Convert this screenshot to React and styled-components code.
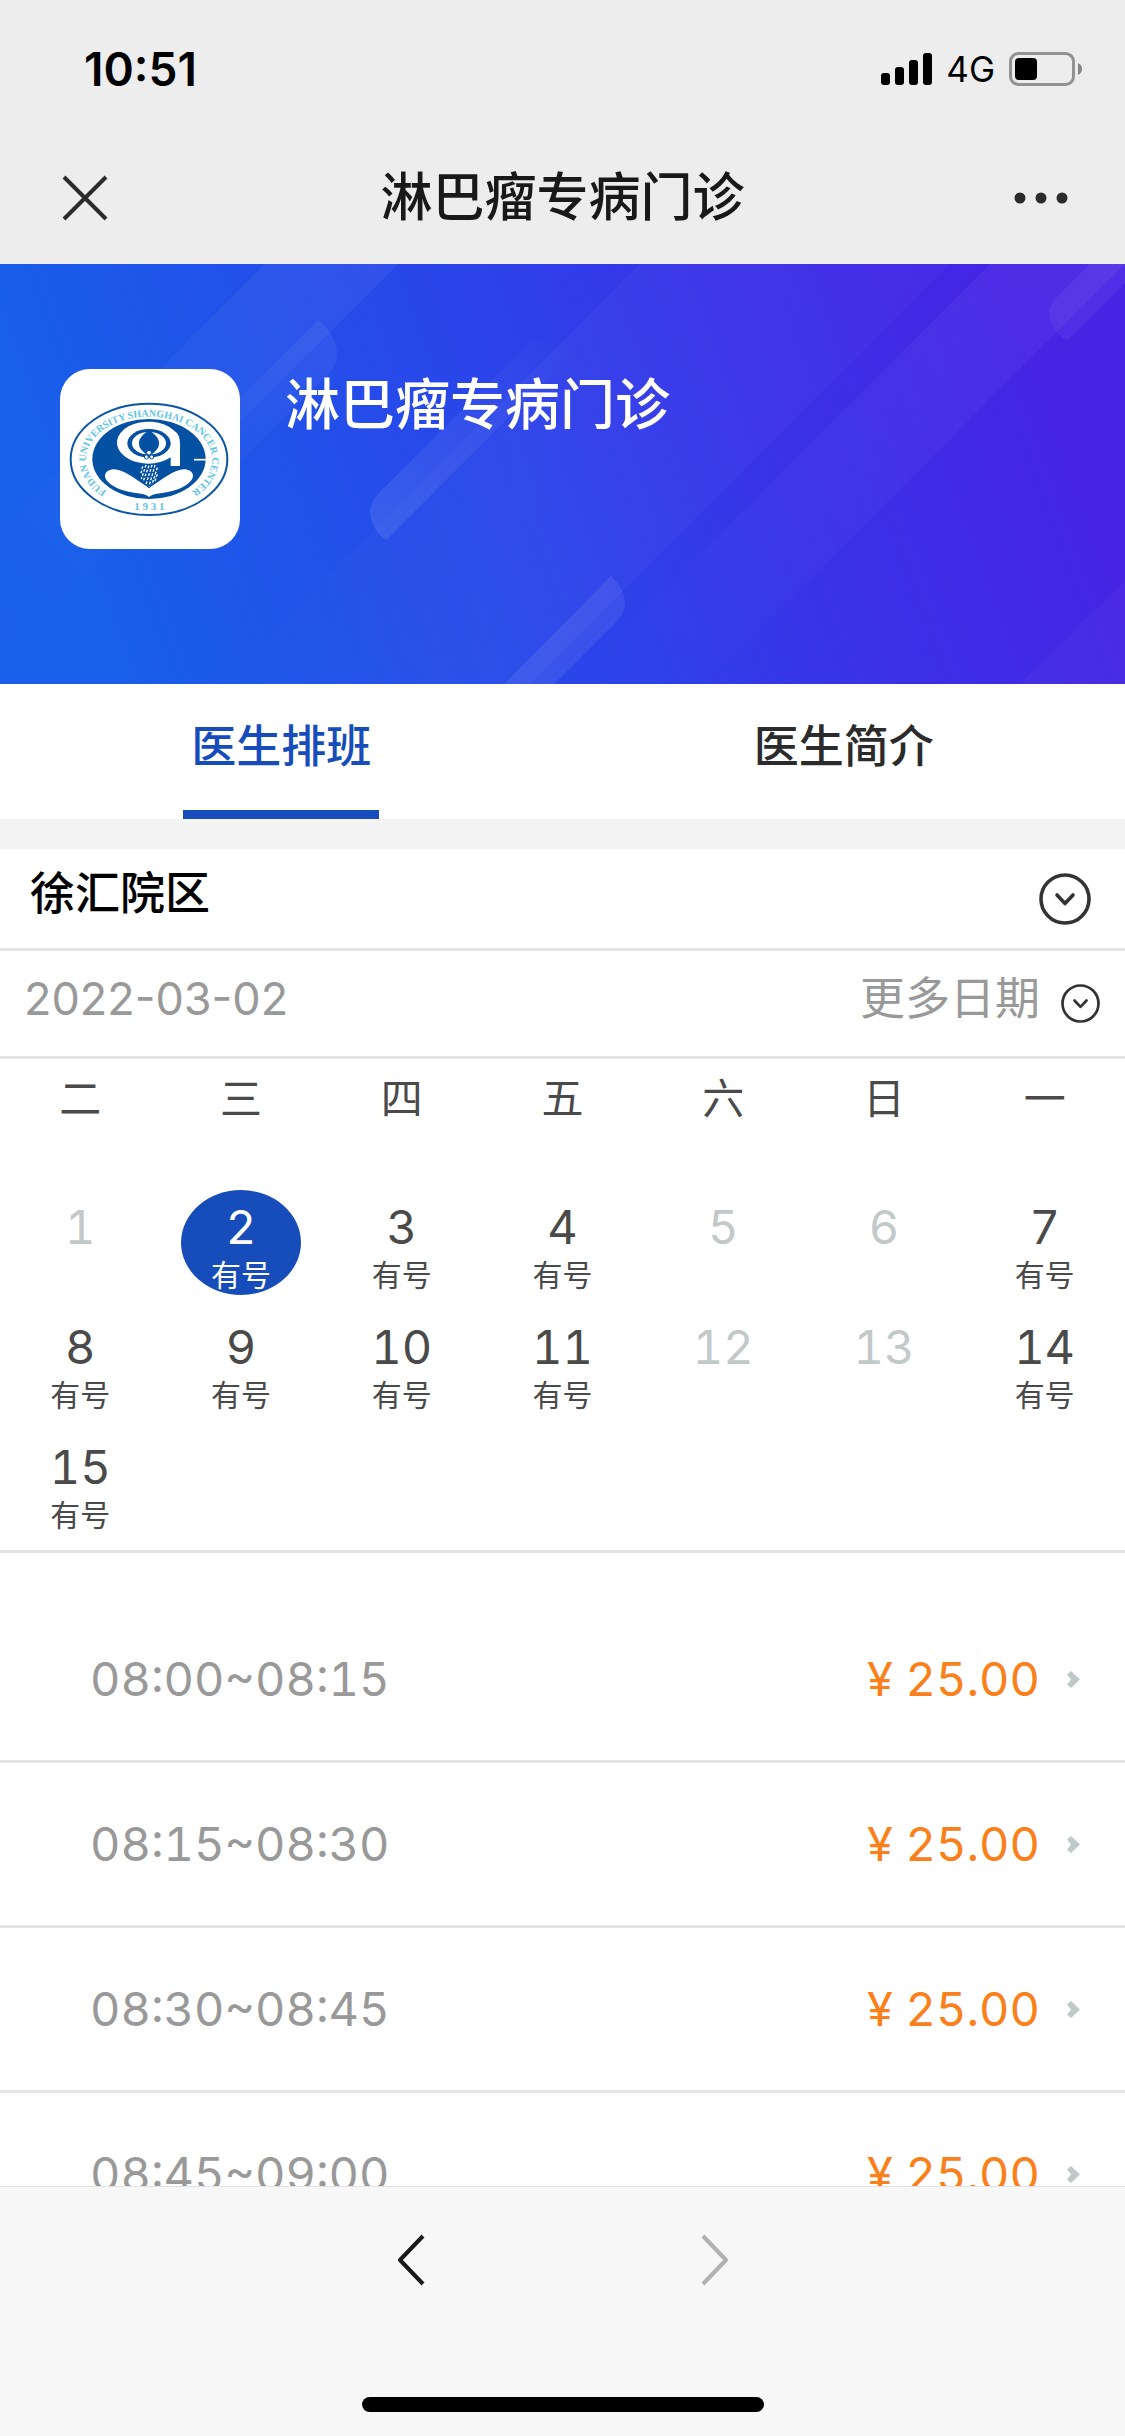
import React, { useState } from 'react';
import styled, { createGlobalStyle } from 'styled-components';

const GlobalStyle = createGlobalStyle`
    * {
        box-sizing: border-box;
    }
    body {
        margin: 0;
        background: #fff;
        font-family: Inter, "Noto Sans CJK SC", sans-serif;
    }
    button {
        margin: 0;
        padding: 0;
        border: 0;
        background: none;
        color: inherit;
        font: inherit;
        cursor: pointer;
    }
    svg {
        display: block;
    }
`;

const Screen = styled.div`
    display: flex;
    flex-direction: column;
    height: 100vh;
    overflow: hidden;
`;

const StatusBar = styled.div`
    display: flex;
    flex: none;
    justify-content: space-between;
    align-items: center;
    height: 132px;
    padding: 6px 43px 0 84px;
    background: #ededed;
    color: #000;
`;

const Clock = styled.span`
    font-size: 46px;
    font-weight: 600;
    line-height: 54px;
`;

const Signals = styled.div`
    display: flex;
    align-items: center;
    gap: 14px;
`;

const Network = styled.span`
    font-size: 35px;
    line-height: 42px;
`;

const NavBar = styled.header`
    display: grid;
    flex: none;
    grid-template-columns: 1fr auto 1fr;
    align-items: center;
    height: 132px;
    padding: 0 57px;
    background: #ededed;
    color: #191919;
`;

const NavTitle = styled.h1`
    margin: 0;
    font-size: 52px;
    font-weight: 500;
    line-height: 66px;
`;

const NavButton = styled.button`
    justify-self: ${props => props.$side};
`;

const Content = styled.main`
    flex: 1;
    min-height: 0;
    overflow: hidden;
`;

const Hero = styled.section`
    position: relative;
    display: flex;
    align-items: flex-start;
    gap: 45px;
    height: 420px;
    padding: 105px 60px;
    background: linear-gradient(70deg, #185fea 10%, #2a45e9 46%, #3a32e7 68%, #4524e4 90%);
    color: #fff;
`;

const Streaks = styled.svg`
    position: absolute;
    inset: 0;
    width: 100%;
    height: 100%;
`;

const LogoCard = styled.div`
    position: relative;
    flex: none;
    width: 180px;
    height: 180px;
    border-radius: 30px;
    background: #fff;
`;

const ClinicName = styled.h2`
    position: relative;
    margin: 0;
    font-size: 55px;
    font-weight: 500;
    line-height: 70px;
`;

const Tabs = styled.nav`
    display: flex;
    border-bottom: 30px solid #f3f3f3;
`;

const Tab = styled.button`
    flex: 1;
    display: flex;
    justify-content: center;
    color: ${props => props.$active ? '#174dbb' : '#2b2b2b'};
    font-size: 45px;
    font-weight: 500;
    line-height: 126px;

    span {
        padding: 0 8px;
        border-bottom: 9px solid ${props => props.$active ? '#174dbb' : 'transparent'};
    }
`;

const PickerRow = styled.button`
    display: flex;
    justify-content: space-between;
    align-items: center;
    width: 100%;
    height: ${props => props.$tall ? '108px' : '102px'};
    padding: ${props => props.$tall ? '0 25px 0 24px' : '0 34px 0 30px'};
    border-bottom: 3px solid #e4e4e4;
    color: ${props => props.$tall ? '#999' : '#000'};
    font-size: 45px;
    font-weight: ${props => props.$tall ? 400 : 500};
    line-height: 60px;
`;

const PickerText = styled.span`
    padding-bottom: 10px;
`;

const More = styled.span`
    display: flex;
    align-items: center;
    gap: 21px;
`;

const Calendar = styled.section`
    border-bottom: 3px solid #e4e4e4;
    color: #4a4a4a;
`;

const Weekdays = styled.div`
    display: grid;
    grid-template-columns: repeat(7, 1fr);
    margin-bottom: 51px;
    font-size: 42px;
    line-height: 80px;
    text-align: center;
`;

const Days = styled.div`
    display: grid;
    grid-template-columns: repeat(7, 1fr);
    grid-auto-rows: 120px;
    justify-items: center;
`;

const Day = styled.button`
    display: flex;
    flex-direction: column;
    align-items: center;
    width: 120px;
    height: 105px;
    padding-top: 7px;
    border-radius: 50%;
    background: ${props => props.$active ? '#174dbb' : 'none'};
    color: ${props => props.$active ? '#fff' : '#4a4a4a'};
    font-size: 47px;
    font-variant-numeric: tabular-nums;
    line-height: 60px;

    &:disabled {
        color: #c3c9c9;
        cursor: default;
    }
`;

const DayNote = styled.small`
    font-size: 30px;
    line-height: 36px;
`;

const Slots = styled.ul`
    margin: 0;
    padding: 45px 0 0;
    list-style: none;
`;

const Slot = styled.button`
    display: flex;
    align-items: center;
    width: 100%;
    height: 165px;
    padding: 0 45px 0 90px;
    border-bottom: 3px solid #e4e4e4;
    color: #999;
    font-size: 47px;
    font-variant-numeric: tabular-nums;
    line-height: 60px;
`;

const Price = styled.span`
    margin-left: auto;
    margin-right: 27px;
    color: #f9801a;
`;

const BottomBar = styled.footer`
    display: flex;
    flex: none;
    flex-direction: column;
    align-items: center;
    justify-content: space-between;
    height: 250px;
    padding-bottom: 24px;
    border-top: 1px solid #e2e2e2;
    background: #f7f7f7;
`;

const History = styled.div`
    display: flex;
    align-items: center;
    gap: 274px;
    height: 146px;
`;

const HomeIndicator = styled.div`
    width: 402px;
    height: 15px;
    border-radius: 8px;
    background: #000;
`;

const SignalIcon = () => (
    <svg width="51" height="32" viewBox="0 0 51 32" aria-hidden="true">
        <rect x="0" y="20" width="9" height="12" rx="3" />
        <rect x="14" y="14" width="9" height="18" rx="3" />
        <rect x="28" y="7" width="9" height="25" rx="3" />
        <rect x="42" y="0" width="9" height="32" rx="3" />
    </svg>
);

const BatteryIcon = () => (
    <svg width="73" height="34" viewBox="0 0 73 34" aria-hidden="true">
        <rect x="1.5" y="1.5" width="63" height="31" rx="8" fill="none" stroke="#929292" strokeWidth="3" />
        <rect x="6" y="6" width="22" height="22" rx="4" />
        <path d="M69 11 Q73 13 73 17 Q73 21 69 23 Z" fill="#848484" />
    </svg>
);

const CircleDown = ({ size }) => (
    <svg width={size} height={size} viewBox="0 0 52 52" fill="none" stroke="#333" strokeWidth="3.6" strokeLinecap="round" strokeLinejoin="round" aria-hidden="true">
        <circle cx="26" cy="26" r="24" />
        <path d="M18 22 L26 30.5 L34 22" />
    </svg>
);

const Chevron = () => (
    <svg width="13" height="17" viewBox="0 0 13 17" aria-hidden="true">
        <path d="M4 0 L13 8.5 L4 17 L0 13.5 L4 8.5 L0 3.5 Z" fill="#c1c8ca" />
    </svg>
);

const Emblem = () => (
    <svg width="180" height="180" viewBox="0 0 540 540" aria-hidden="true">
        <defs>
            <path id="ring" d="M162 379 A189 129 0 1 1 372 379" />
        </defs>
        <ellipse cx="267" cy="271" rx="235" ry="167" fill="none" stroke="#0b55a5" strokeWidth="6" />
        <ellipse cx="267" cy="270" rx="170" ry="120" fill="#0450a2" />
        <g fill="#62c4e3" fontFamily="'Liberation Serif', serif" fontWeight="700">
            <text fontSize="30" textAnchor="middle">
                <textPath href="#ring" startOffset="50%">FUDAN UNIVERSITY SHANGHAI CANCER CENTER</textPath>
            </text>
            <text x="268" y="424" fontSize="33" textAnchor="middle">1 9 3 1</text>
        </g>
        {/* the letter "a" with an eye in its bowl */}
        <path d="M360 223 V291 H332 V265 A94 63 0 1 1 341 184 Q360 196 360 223 Z" fill="#fff" />
        <ellipse cx="267" cy="223" rx="65" ry="43" fill="#0450a2" />
        <ellipse cx="267" cy="223" rx="51" ry="34" fill="#fff" />
        <path d="M267 184 Q328 223 267 262 Q206 223 267 184 Z" fill="#0450a2" />
        {/* leaves */}
        <path d="M267 384 Q258 374 222 371 C160 364 116 326 143 306 C175 287 215 323 267 357 C319 323 359 287 391 306 C418 326 374 364 312 371 Q276 374 267 384 Z" fill="#fff" />
        <path d="M241 290 H293 L297 326 L267 358 L237 326 Z" fill="#0450a2" />
        <g fill="none" stroke="#fff" strokeWidth="4" strokeDasharray="8 5">
            <path d="M258 288 L244 330" />
            <path d="M267 290 L250 336" />
            <path d="M276 288 L258 346" />
            <path d="M285 288 L267 352" />
            <path d="M292 296 L276 346" />
            <path d="M292 316 L284 338" />
            <path d="M248 292 L242 316" />
        </g>
        <g fill="#fff" stroke="#0450a2" strokeWidth="3">
            <circle cx="267" cy="251" r="7" />
            <circle cx="259" cy="264" r="6" />
            <circle cx="275" cy="264" r="6" />
        </g>
        <path d="M402 272 H438" stroke="#fff" strokeWidth="5" />
    </svg>
);

// diagonal light streaks over the banner gradient
const HeroStreaks = () => (
    <Streaks viewBox="0 0 1125 420" preserveAspectRatio="none" aria-hidden="true">
        <defs>
            <linearGradient id="fadeDown" x1="1" y1="0" x2="0" y2="1">
                <stop offset="0" stopColor="#fff" stopOpacity=".05" />
                <stop offset="1" stopColor="#fff" stopOpacity="0" />
            </linearGradient>
            <linearGradient id="fadeSides" x1="0" y1="0" x2="1" y2="0">
                <stop offset="0" stopColor="#fff" stopOpacity="0" />
                <stop offset=".4" stopColor="#fff" stopOpacity=".03" />
                <stop offset="1" stopColor="#fff" stopOpacity=".02" />
            </linearGradient>
            <linearGradient id="pillDown" x1="1" y1="0" x2="0" y2="1">
                <stop offset="0" stopColor="#fff" stopOpacity=".06" />
                <stop offset="1" stopColor="#fff" stopOpacity="0" />
            </linearGradient>
            <linearGradient id="pillUp" x1="0" y1="1" x2="1" y2="0">
                <stop offset="0" stopColor="#fff" stopOpacity=".1" />
                <stop offset="1" stopColor="#fff" stopOpacity="0" />
            </linearGradient>
        </defs>
        <path d="M265 0 H398 L0 398 V265 Z" fill="url(#fadeDown)" />
        <path d="M640 0 H950 L530 420 H220 Z" fill="url(#fadeSides)" />
        <path d="M990 0 H1125 L705 420 H570 Z" fill="url(#fadeDown)" />
        <path d="M1125 316 V420 H1021 Z" fill="#fff" fillOpacity=".03" />
        <path d="M318 56 Q338 72 337 92 Q336 102 328 110 L218 220 L154 220 Z" fill="url(#pillDown)" />
        <path d="M386 276 Q370 264 370 246 Q371 238 379 229 L530 78 H584 Z" fill="url(#pillUp)" />
        <path d="M611 312 Q626 326 625 342 Q624 350 617 357 L554 420 H504 Z" fill="#fff" fillOpacity=".08" />
        <path d="M1067 77 Q1049 64 1049 48 Q1050 40 1058 32 L1090 0 H1125 V19 Z" fill="#fff" fillOpacity=".05" />
    </Streaks>
);

const tabs = ['医生排班', '医生简介'];
const weekdays = ['二', '三', '四', '五', '六', '日', '一'];
const closedDays = [1, 5, 6, 12, 13];
const days = Array.from({ length: 15 }, (_, i) => i + 1);
const slots = [
    '08:00~08:15',
    '08:15~08:30',
    '08:30~08:45',
    '08:45~09:00',
];

const App = () => {
    const [tab, setTab] = useState(0);
    const [day, setDay] = useState(2);

    return (
        <Screen>
            <GlobalStyle />
            <StatusBar>
                <Clock>10:51</Clock>
                <Signals>
                    <SignalIcon />
                    <Network>4G</Network>
                    <BatteryIcon />
                </Signals>
            </StatusBar>
            <NavBar>
                <NavButton $side="start" aria-label="关闭">
                    <svg width="56" height="56" viewBox="0 0 56 56" stroke="#2b2b2b" strokeWidth="4">
                        <path d="M7 7 L49 49 M49 7 L7 49" />
                    </svg>
                </NavButton>
                <NavTitle>淋巴瘤专病门诊</NavTitle>
                <NavButton $side="end" aria-label="更多">
                    <svg width="54" height="56" viewBox="0 0 54 56" fill="#2b2b2b">
                        <circle cx="6" cy="28" r="5.5" />
                        <circle cx="27" cy="28" r="5.5" />
                        <circle cx="48" cy="28" r="5.5" />
                    </svg>
                </NavButton>
            </NavBar>
            <Content>
                <Hero>
                    <HeroStreaks />
                    <LogoCard>
                        <Emblem />
                    </LogoCard>
                    <ClinicName>淋巴瘤专病门诊</ClinicName>
                </Hero>
                <Tabs>
                    {tabs.map((name, i) => (
                        <Tab key={name} $active={i === tab} onClick={() => setTab(i)}>
                            <span>{name}</span>
                        </Tab>
                    ))}
                </Tabs>
                <PickerRow>
                    <PickerText>徐汇院区</PickerText>
                    <CircleDown size={52} />
                </PickerRow>
                <PickerRow $tall>
                    <PickerText>2022-03-{String(day).padStart(2, '0')}</PickerText>
                    <More>
                        <PickerText>更多日期</PickerText>
                        <CircleDown size={39} />
                    </More>
                </PickerRow>
                <Calendar>
                    <Weekdays>
                        {weekdays.map(name => <span key={name}>{name}</span>)}
                    </Weekdays>
                    <Days>
                        {days.map(n => {
                            const closed = closedDays.includes(n);
                            return (
                                <Day key={n} $active={n === day} disabled={closed} onClick={() => setDay(n)}>
                                    {n}
                                    {!closed && <DayNote>有号</DayNote>}
                                </Day>
                            );
                        })}
                    </Days>
                </Calendar>
                <Slots>
                    {slots.map(time => (
                        <li key={time}>
                            <Slot>
                                {time}
                                <Price>¥ 25.00</Price>
                                <Chevron />
                            </Slot>
                        </li>
                    ))}
                </Slots>
            </Content>
            <BottomBar>
                <History>
                    <button aria-label="后退">
                        <svg width="30" height="54" viewBox="0 0 30 54" fill="none" stroke="#191919" strokeWidth="4">
                            <path d="M27 3 L4 27 L27 51" strokeLinejoin="round" />
                        </svg>
                    </button>
                    <button aria-label="前进">
                        <svg width="30" height="54" viewBox="0 0 30 54" fill="none" stroke="#b0b0b0" strokeWidth="4">
                            <path d="M3 3 L26 27 L3 51" strokeLinejoin="round" />
                        </svg>
                    </button>
                </History>
                <HomeIndicator />
            </BottomBar>
        </Screen>
    );
};

export default App;
